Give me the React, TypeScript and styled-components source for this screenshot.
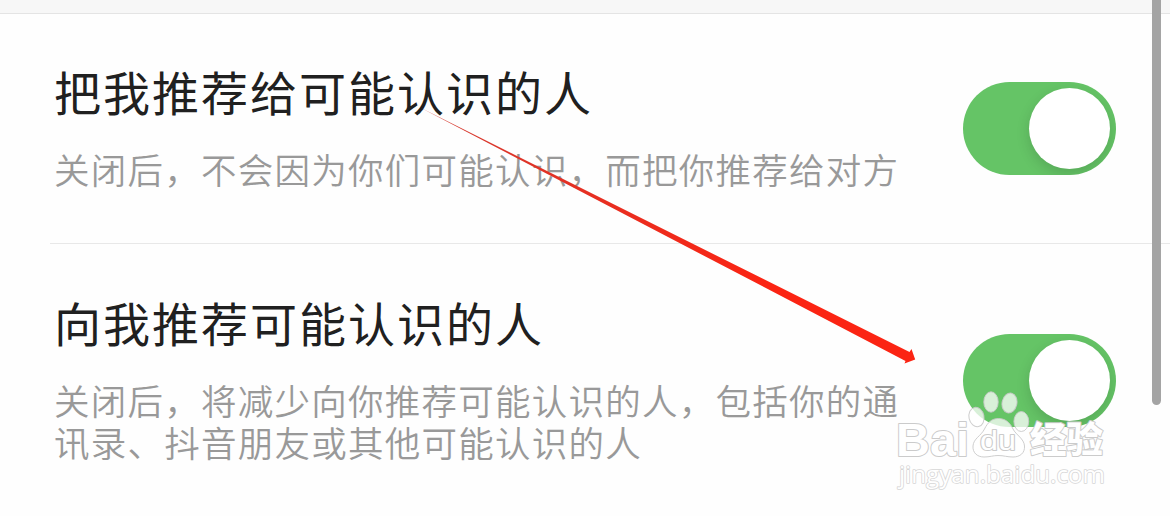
import styled, { createGlobalStyle } from "styled-components";

const settings = [
  {
    title: "把我推荐给可能认识的人",
    description: "关闭后，不会因为你们可能认识，而把你推荐给对方",
    height: 230,
    textTop: 42,
    gap: 22,
    switchTop: 68,
  },
  {
    title: "向我推荐可能认识的人",
    description:
      "关闭后，将减少向你推荐可能认识的人，包括你的通讯录、抖音朋友或其他可能认识的人",
    height: 272,
    textTop: 43,
    gap: 22,
    switchTop: 90,
  },
];

export default function App() {
  return (
    <>
      <GlobalStyle />
      <Page>
        <TopBar />
        <main>
          {settings.map((item) => (
            <Row key={item.title} $height={item.height}>
              <TextBlock $top={item.textTop} $gap={item.gap}>
                <Title>{item.title}</Title>
                <Description>{item.description}</Description>
              </TextBlock>
              <Switch
                type="button"
                role="switch"
                aria-checked="true"
                aria-label={item.title}
                $top={item.switchTop}
              >
                <Knob />
              </Switch>
            </Row>
          ))}
        </main>
        <Scrollbar />
        <Pointer />
        <Watermark />
      </Page>
    </>
  );
}

function Pointer() {
  return (
    <PointerSvg width="510" height="270" viewBox="415 100 510 270">
      <path
        d="M420 107.500 L909.500 352 L911.500 349 L915.200 359.500 L904.500 363.500 L905.500 361 Z"
        fill="url(#pointer-red)"
      />
      <defs>
        <linearGradient id="pointer-red">
          <stop offset="0" stopColor="#d23a30" />
          <stop offset="0.7" stopColor="#fb2413" />
        </linearGradient>
      </defs>
    </PointerSvg>
  );
}

function Watermark() {
  return (
    <WatermarkSvg width="220" height="110" viewBox="890 385 220 110">
      <g fill="#fff" fillOpacity="0.75" stroke="#c9c9c9" strokeOpacity="0.9">
        <ellipse cx="976.5" cy="417" rx="7.5" ry="9.8" transform="rotate(-12 976.5 417)" />
        <ellipse cx="991" cy="402" rx="7.2" ry="10.2" />
        <ellipse cx="1009.5" cy="403" rx="7.4" ry="10" transform="rotate(12 1009.5 403)" />
        <ellipse cx="1021.3" cy="421.5" rx="7.4" ry="10" />
        <path d="M998.5 418.5C1005 418.5 1010 422.5 1013 429C1016 435 1024 438.5 1024.5 446C1025 453 1020 457 1013 457C1007 457 1004 455.5 998 455.5C993 455.5 990 457 984 457C977 457 972.5 452.5 973 446C973.5 438.5 981 436 984.5 429C988 422 992 418.5 998.5 418.5Z" />
      </g>
      <g
        fill="#fff"
        stroke="#cbcbcb"
        strokeWidth="2"
        strokeLinejoin="round"
        paintOrder="stroke"
        fontFamily="'Liberation Sans', Arial, sans-serif"
      >
        <text x="896" y="455.5" fontSize="47" fontWeight="700" textLength="73" lengthAdjust="spacingAndGlyphs">
          Bai
        </text>
        <text x="980" y="450" fontSize="28" textLength="36" lengthAdjust="spacingAndGlyphs">
          du
        </text>
        <text
          x="1030"
          y="453"
          fontSize="36.5"
          fontWeight="900"
          fontFamily="'Noto Sans CJK SC', sans-serif"
          textLength="73"
          lengthAdjust="spacingAndGlyphs"
        >
          经验
        </text>
        <text
          x="899"
          y="483"
          fontSize="24.5"
          fontWeight="500"
          stroke="#d6d6d6"
          strokeWidth="1.6"
          fontFamily="'Open Sans', sans-serif"
          textLength="206"
          lengthAdjust="spacingAndGlyphs"
        >
          jingyan.baidu.com
        </text>
      </g>
    </WatermarkSvg>
  );
}

const GlobalStyle = createGlobalStyle`
  * {
    box-sizing: border-box;
  }

  body {
    margin: 0;
    background: #fefefe;
    font-family: "Noto Sans CJK SC", sans-serif;
  }
`;

const Page = styled.div`
  position: relative;
  width: 1170px;
  height: 516px;
  overflow: hidden;
`;

const TopBar = styled.header`
  height: 14px;
  background: #f7f7f7;
  border-bottom: 1px solid #e4e4e4;
`;

const Row = styled.section<{ $height: number }>`
  display: flex;
  align-items: flex-start;
  justify-content: space-between;
  height: ${({ $height }) => $height}px;
  margin-left: 50px;
  padding: 0 54px 0 4px;
  border-bottom: 1px solid #e8e8e8;

  &:last-child {
    border-bottom: 0;
  }
`;

const TextBlock = styled.div<{ $top: number; $gap: number }>`
  display: flex;
  flex-direction: column;
  gap: ${({ $gap }) => $gap}px;
  width: 850px;
  padding-top: ${({ $top }) => $top}px;
`;

const Title = styled.h2`
  margin: 0;
  color: #202020;
  font-size: 47px;
  font-weight: 400;
  line-height: 70px;
  letter-spacing: 2px;
`;

const Description = styled.p`
  margin: 0;
  color: #999;
  font-size: 35.5px;
  font-weight: 350;
  line-height: 42px;
  letter-spacing: 1.25px;
`;

const Switch = styled.button<{ $top: number }>`
  display: flex;
  justify-content: flex-end;
  flex: none;
  width: 153px;
  height: 93px;
  margin: ${({ $top }) => $top}px 0 0;
  padding: 6px;
  border: 0;
  border-radius: 47px;
  background: #65c466;
  overflow: hidden;
`;

const Knob = styled.span`
  width: 81px;
  height: 81px;
  border-radius: 50%;
  background: #fff;
  box-shadow: 0 5px 14px rgba(0, 0, 0, 0.14);
`;

const Scrollbar = styled.div`
  position: absolute;
  top: -10px;
  left: 1152px;
  width: 9px;
  height: 415px;
  border-radius: 5px;
  background: #a4a4a4;
`;

const PointerSvg = styled.svg`
  position: absolute;
  top: 100px;
  left: 415px;
`;

const WatermarkSvg = styled.svg`
  position: absolute;
  top: 385px;
  left: 890px;
`;
